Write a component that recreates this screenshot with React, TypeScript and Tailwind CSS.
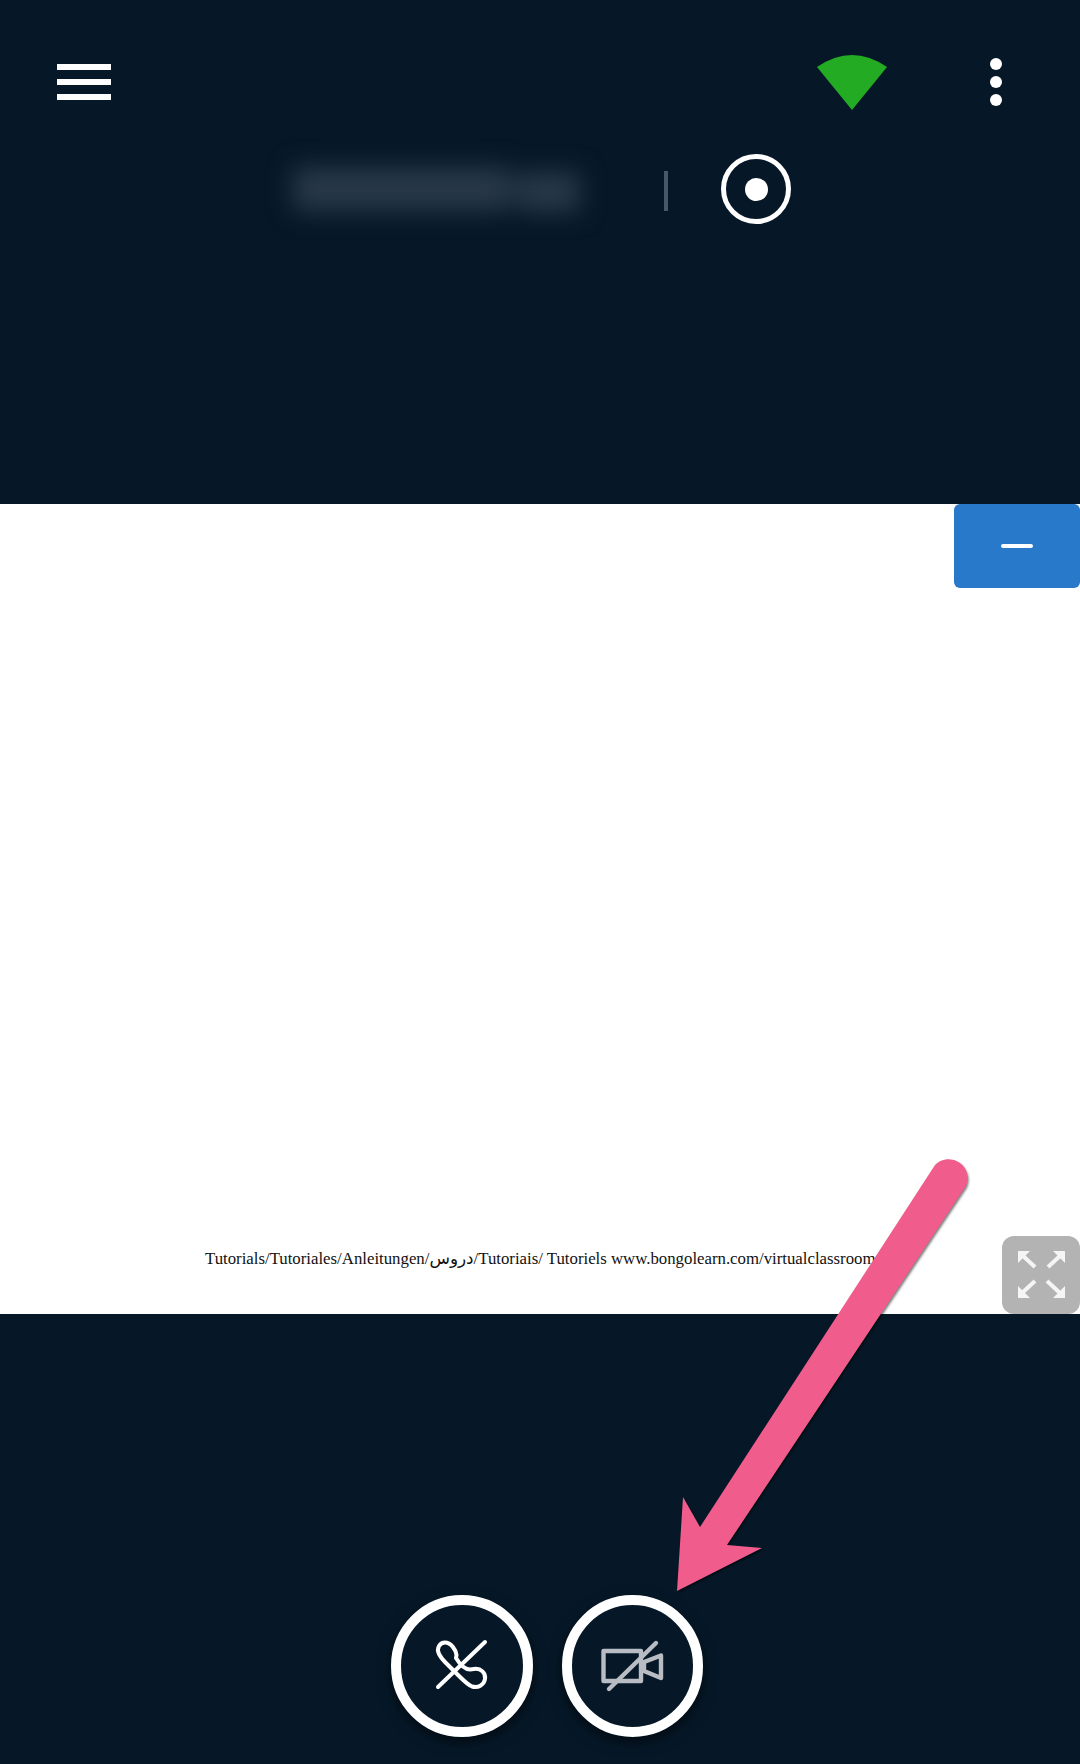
import React from "react";

function FullscreenIcon() {
  return (
    <svg width="80" height="82" viewBox="0 0 80 82" fill="none" className="-ml-[2px]">
      <g stroke="#f5f5f5" strokeWidth="4">
        <line x1="35" y1="33" x2="22" y2="21" />
        <line x1="48" y1="33" x2="61" y2="21" />
        <line x1="35" y1="47" x2="22" y2="59" />
        <line x1="47" y1="47" x2="60" y2="59" />
      </g>
      <g fill="#f5f5f5">
        <polygon points="18,17 30,17 18,29" />
        <polygon points="65,17 53,17 65,29" />
        <polygon points="18,64 30,64 18,52" />
        <polygon points="65,64 53,64 65,52" />
      </g>
    </svg>
  );
}

function PhoneOffIcon() {
  return (
    <svg width="74" height="72" viewBox="0 0 74 72" fill="none" stroke="#ffffff" strokeWidth="4" strokeLinecap="round" strokeLinejoin="round">
      <path d="M14 24C11 18 15 12.5 20 12.5C26 12.5 31 20 31.5 25L31 28C34 33 39 39.5 45 39.5L49 39C56 38 61 43 60 49C59 55 53 58.5 47 56.5C43 55 38 50 33 45L20 32C18 30 15.5 27 14 24Z" />
      <line x1="13" y1="57" x2="60" y2="12" />
    </svg>
  );
}

function VideoOffIcon() {
  return (
    <svg width="75" height="70" viewBox="0 0 75 70" fill="none" stroke="#b9bcc2" strokeWidth="4.4" strokeLinecap="round" strokeLinejoin="round">
      <rect x="8.5" y="20" width="37.5" height="30" />
      <polygon points="49,31 66,24.5 66,47 49,40" />
      <line x1="14" y1="58" x2="61" y2="12" />
    </svg>
  );
}

export default function App() {
  return (
    <div className="relative w-[1080px] h-[1764px] flex flex-col bg-[#061828] overflow-hidden">
      {/* Top bar */}
      <div className="h-[504px] shrink-0">
        <div className="flex items-center h-[55px] mt-[55px] pl-[57px] pr-[78px]">
          <div className="flex flex-col gap-[9px] mb-[2px]">
            <div className="w-[54px] h-[6px] bg-white" />
            <div className="w-[54px] h-[6px] bg-white" />
            <div className="w-[54px] h-[6px] bg-white" />
          </div>
          <svg width="70" height="55" viewBox="0 0 70 55" className="ml-auto">
            <path d="M35 55L0 12Q35 -12 70 12Z" fill="#23ab23" />
          </svg>
          <div className="flex flex-col gap-[6px] ml-[103px] mb-[2px]">
            <div className="w-[12px] h-[12px] rounded-full bg-white" />
            <div className="w-[12px] h-[12px] rounded-full bg-white" />
            <div className="w-[12px] h-[12px] rounded-full bg-white" />
          </div>
        </div>

        <div className="flex items-center h-[70px] mt-[44px] pl-[293px]">
          {/* blurred out name */}
          <div className="flex items-center w-[287px] h-[40px] blur-[12px]">
            <div className="w-[215px] h-[44px] bg-[#283849]" />
            <div className="w-[12px] h-[30px] bg-[#1e2e3f]" />
            <div className="w-[60px] h-[40px] mt-[6px] bg-[#283849]" />
          </div>
          <div className="w-[4px] h-[40px] ml-[84px] mt-[4px] bg-[#4a5866]" />
          <div className="flex items-center justify-center w-[70px] h-[70px] ml-[53px] rounded-full border-[5px] border-white">
            <div className="w-[23px] h-[23px] rounded-full bg-white" />
          </div>
        </div>
      </div>

      {/* Slide */}
      <div className="relative h-[810px] shrink-0 bg-white pt-[743px] pl-[205px]">
        <p className="text-[16.8px] leading-[24px] whitespace-nowrap text-[#111111] [font-family:'Liberation_Serif','DejaVu_Sans',serif]">
          Tutorials/Tutoriales/Anleitungen/دروس/Tutoriais/ Tutoriels www.bongolearn.com/virtualclassroom
        </p>
        <button className="absolute top-0 right-0 flex items-center justify-center w-[126px] h-[84px] rounded-[6px] bg-[#2879c9]">
          <span className="w-[32px] h-[4px] rounded-full bg-white" />
        </button>
        <button className="absolute bottom-0 right-0 flex items-center justify-center w-[78px] h-[78px] rounded-[12px] bg-[#b3b3b3]">
          <FullscreenIcon />
        </button>
      </div>

      {/* Call controls */}
      <div className="flex gap-[29px] pt-[281px] pl-[391px]">
        <button className="flex items-center justify-center w-[142px] h-[142px] rounded-full border-[10px] border-white shadow-[0_5px_14px_rgba(0,0,0,0.6)]">
          <PhoneOffIcon />
        </button>
        <button className="flex items-center justify-center w-[141px] h-[142px] rounded-full border-[10px] border-white shadow-[0_5px_14px_rgba(0,0,0,0.6)]">
          <VideoOffIcon />
        </button>
      </div>

      {/* Annotation arrow */}
      <svg width="1080" height="1764" viewBox="0 0 1080 1764" className="absolute inset-0 pointer-events-none drop-shadow-[1px_2px_1px_rgba(0,0,0,0.5)]">
        <path d="M700 1527L683 1497L677 1591L762 1548L727 1545L966 1186A19 19 0 0 0 935 1165Z" fill="#f05c8c" />
      </svg>
    </div>
  );
}
